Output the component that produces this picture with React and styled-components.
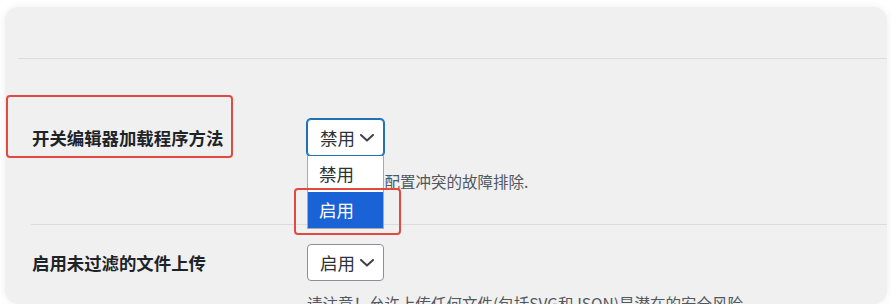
import styled, { createGlobalStyle } from 'styled-components';

const GlobalStyle = createGlobalStyle`
  html, body {
    margin: 0;
    padding: 0;
    background: #ffffff;
  }
  body {
    font-family: "Noto Sans CJK SC", "Noto Sans", sans-serif;
    color: #1d2327;
  }
`;

const Page = styled.div`
  padding: 7px 4px 0 5px;
`;

const Card = styled.section`
  height: 297px;
  background: #f0f0f0;
  border-radius: 14px;
  box-shadow: 0 0 8px rgba(0, 0, 0, 0.07);
  overflow: hidden;
`;

const TopRule = styled.div`
  height: 51px;
  margin-left: 13px;
  border-bottom: 1px solid #dcdcde;
`;

const Row = styled.div`
  display: grid;
  grid-template-columns: 276px 1fr;
  margin-left: 26px;
  padding-top: ${(p) => p.$top}px;
  padding-bottom: ${(p) => p.$bottom}px;
  border-bottom: ${(p) => (p.$last ? 'none' : '1px solid #dcdcde')};
`;

const LabelCell = styled.div`
  padding-left: 1px;
`;

const Label = styled.span`
  position: relative;
  display: inline-block;
  font-size: 17.4px;
  font-weight: 700;
  line-height: 37px;
  color: #1d2327;
`;

const Marker = styled.span`
  position: absolute;
  top: ${(p) => p.$t}px;
  right: ${(p) => p.$r}px;
  bottom: ${(p) => p.$b}px;
  left: ${(p) => p.$l}px;
  border: 2.5px solid #e24a3f;
  border-radius: 4px;
  pointer-events: none;
  z-index: 3;
`;

const Control = styled.div`
  display: flex;
  flex-direction: column;
  align-items: flex-start;
`;

const SelectWrap = styled.div`
  position: relative;
`;

const Select = styled.div`
  box-sizing: border-box;
  display: flex;
  align-items: center;
  justify-content: space-between;
  width: 77px;
  height: 37px;
  padding: 0 9px 0 12px;
  background: #ffffff;
  border: 1px solid ${(p) => (p.$focus ? '#2271b1' : '#8c8f94')};
  box-shadow: ${(p) => (p.$focus ? '0 0 0 1px #2271b1' : 'none')};
  border-radius: 4px;
  font-size: 17.5px;
  color: #2c3338;
`;

const Menu = styled.ul`
  position: absolute;
  top: 37px;
  left: 0;
  box-sizing: border-box;
  width: 77px;
  margin: 0;
  padding: 0;
  list-style: none;
  background: #ffffff;
  border: 1px solid #a7aaad;
  border-top: none;
  z-index: 2;
`;

const Option = styled.li`
  position: relative;
  height: 36px;
  padding-left: 11px;
  line-height: 36px;
  font-size: 17.5px;
  background: ${(p) => (p.$active ? '#1a63d6' : '#ffffff')};
  color: ${(p) => (p.$active ? '#ffffff' : '#2c3338')};
`;

const Description = styled.p`
  margin: ${(p) => p.$gap}px 0 0;
  font-size: 15.5px;
  line-height: 22px;
  color: #50575e;
  white-space: nowrap;
`;

function Chevron() {
  return (
    <svg width="14" height="8" viewBox="0 0 14 8" fill="none">
      <path d="M1 1l6 5.6L13 1" stroke="#3c434a" strokeWidth="2" strokeLinecap="round" strokeLinejoin="round" />
    </svg>
  );
}

export default function App() {
  return (
    <>
      <GlobalStyle />
      <Page>
        <Card>
          <TopRule />
          <Row $top={60} $bottom={32}>
            <LabelCell>
              <Label>
                开关编辑器加载程序方法
                <Marker $t={-24} $r={-10} $b={-2} $l={-26} />
              </Label>
            </LabelCell>
            <Control>
              <SelectWrap>
                <Select $focus>
                  禁用
                  <Chevron />
                </Select>
                <Menu>
                  <Option>禁用</Option>
                  <Option $active>
                    启用
                    <Marker $t={-4} $r={-18} $b={-7} $l={-14} />
                  </Option>
                </Menu>
              </SelectWrap>
              <Description $gap={14}>用于加载器配置冲突的故障排除.</Description>
            </Control>
          </Row>
          <Row $top={19} $bottom={0} $last>
            <LabelCell>
              <Label>启用未过滤的文件上传</Label>
            </LabelCell>
            <Control>
              <Select>
                启用
                <Chevron />
              </Select>
              <Description $gap={11}>请注意！允许上传任何文件(包括SVG和JSON)是潜在的安全风险。</Description>
            </Control>
          </Row>
        </Card>
      </Page>
    </>
  );
}
